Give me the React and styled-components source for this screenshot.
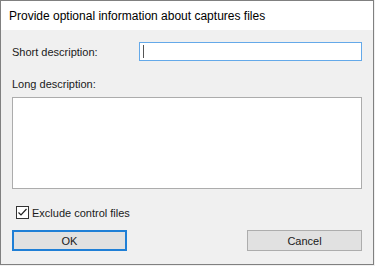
import React from 'react';
import styled, { createGlobalStyle } from 'styled-components';

const GlobalStyle = createGlobalStyle`
  html, body {
    margin: 0;
    padding: 0;
    background: #f0f0f0;
  }
  body {
    font-family: "Liberation Sans", Arial, sans-serif;
  }
`;

const Window = styled.div`
  box-sizing: border-box;
  width: 374px;
  height: 265px;
  border: 1px solid #808080;
  display: flex;
  flex-direction: column;
  background: #f0f0f0;
`;

const TitleBar = styled.div`
  height: 29px;
  flex-shrink: 0;
  background: #fff;
  display: flex;
  align-items: center;
  padding-left: 8px;
  font-size: 12px;
  color: #000;
`;

const Body = styled.div`
  flex: 1;
  display: flex;
  flex-direction: column;
  padding: 12px 11px 0 11px;
`;

const FieldRow = styled.div`
  display: flex;
  align-items: center;
  height: 19px;
`;

const Label = styled.label`
  font-size: 11px;
  color: #1a1a1a;
  width: ${({ width }) => width || 'auto'};
  flex-shrink: 0;
`;

const TextBox = styled.div`
  box-sizing: border-box;
  flex: 1;
  height: 19px;
  background: #fff;
  border: 1px solid #64a9e9;
  display: flex;
  align-items: center;
  padding-left: 3px;
`;

const Caret = styled.span`
  width: 1px;
  height: 13px;
  background: #555;
`;

const LongLabel = styled(Label)`
  margin-top: 16px;
  height: 14px;
  line-height: 14px;
`;

const TextArea = styled.div`
  box-sizing: border-box;
  margin-top: 6px;
  height: 92px;
  background: #fff;
  border: 1px solid #acacac;
`;

const CheckRow = styled.label`
  display: flex;
  align-items: center;
  margin-top: 17px;
  margin-left: 4px;
  height: 13px;
  font-size: 11px;
  color: #1a1a1a;
  gap: 3px;
`;

const Box = styled.span`
  box-sizing: border-box;
  width: 13px;
  height: 13px;
  border: 1px solid #333;
  background: #fff;
  display: flex;
  align-items: center;
  justify-content: center;
`;

const ButtonRow = styled.div`
  display: flex;
  justify-content: space-between;
  margin-top: 11px;
`;

const Button = styled.button`
  box-sizing: border-box;
  width: 115px;
  height: 21px;
  padding: 0;
  background: #e1e1e1;
  border: ${({ primary }) => (primary ? '2px solid #1f7fd6' : '1px solid #adadad')};
  font-family: "Liberation Sans", Arial, sans-serif;
  font-size: 11px;
  color: #1a1a1a;
`;

const App = () => (
  <>
    <GlobalStyle />
    <Window>
      <TitleBar>Provide optional information about captures files</TitleBar>
      <Body>
        <FieldRow>
          <Label width="127px">Short description:</Label>
          <TextBox>
            <Caret />
          </TextBox>
        </FieldRow>
        <LongLabel>Long description:</LongLabel>
        <TextArea />
        <CheckRow>
          <Box>
            <svg width="11" height="11" viewBox="0 0 11 11">
              <path d="M1.5 5.5 L4 8 L9.5 2" fill="none" stroke="#222" strokeWidth="1.2" />
            </svg>
          </Box>
          Exclude control files
        </CheckRow>
        <ButtonRow>
          <Button primary>OK</Button>
          <Button>Cancel</Button>
        </ButtonRow>
      </Body>
    </Window>
  </>
);

export default App;
